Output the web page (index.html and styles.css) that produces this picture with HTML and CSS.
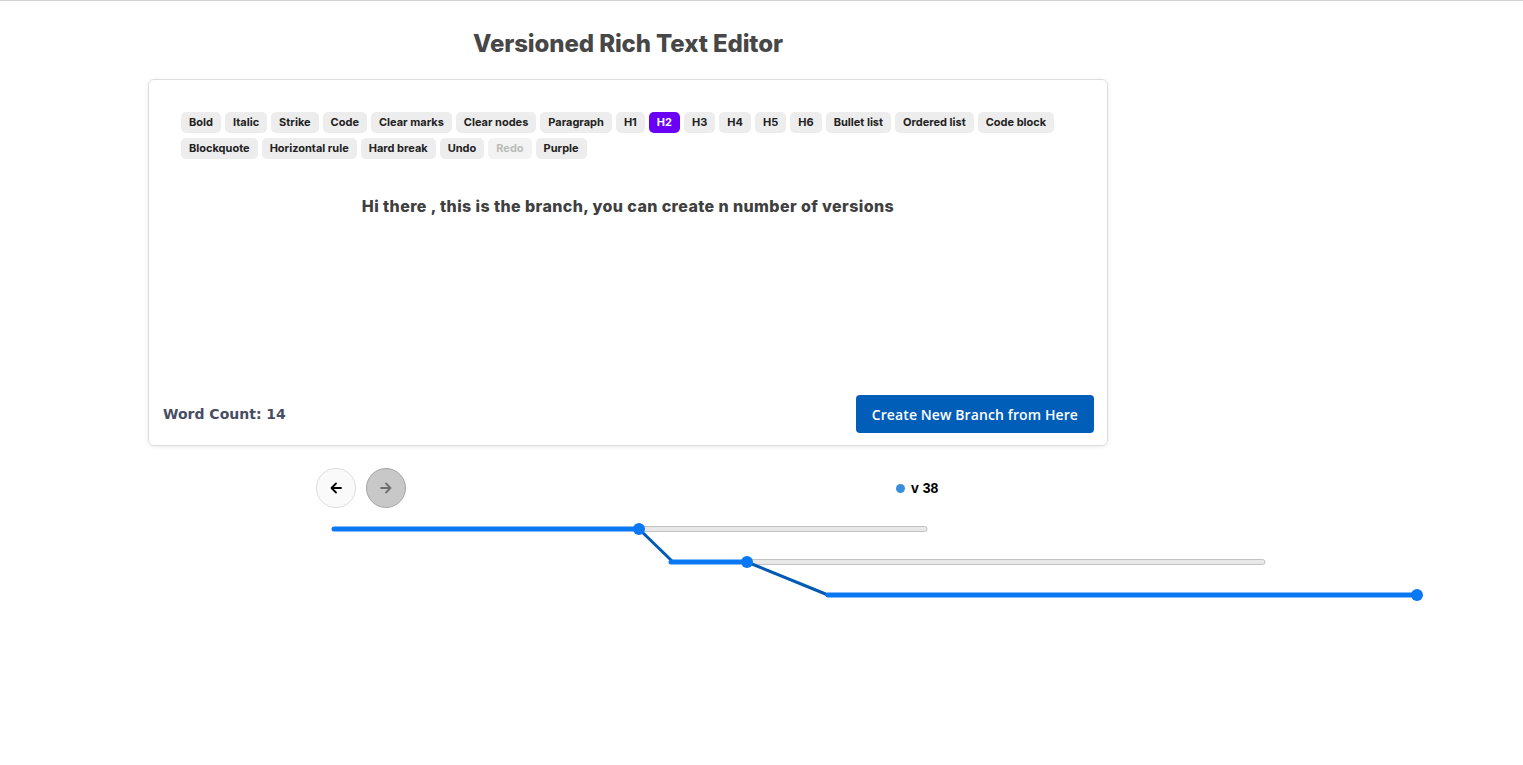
FILE: index.html
```html
<!DOCTYPE html>
<html>
<head>
<meta charset="utf-8">
<title>Versioned Rich Text Editor</title>
<link rel="stylesheet" href="styles.css">
</head>
<body>
<div class="app">
  <h1 class="title">Versioned Rich Text Editor</h1>
  <div class="card">
    <div class="toolbar">
      <button class="tb">Bold</button>
      <button class="tb">Italic</button>
      <button class="tb">Strike</button>
      <button class="tb">Code</button>
      <button class="tb">Clear marks</button>
      <button class="tb">Clear nodes</button>
      <button class="tb">Paragraph</button>
      <button class="tb">H1</button>
      <button class="tb active">H2</button>
      <button class="tb">H3</button>
      <button class="tb">H4</button>
      <button class="tb">H5</button>
      <button class="tb">H6</button>
      <button class="tb">Bullet list</button>
      <button class="tb">Ordered list</button>
      <button class="tb">Code block</button>
      <button class="tb">Blockquote</button>
      <button class="tb">Horizontal rule</button>
      <button class="tb">Hard break</button>
      <button class="tb">Undo</button>
      <button class="tb disabled">Redo</button>
      <button class="tb">Purple</button>
    </div>
    <div class="editor">
      <h2 class="doc-heading">Hi there , this is the branch, you can create n number of versions</h2>
    </div>
    <div class="footer">
      <span class="word-count">Word Count: 14</span>
      <button class="branch-btn">Create New Branch from Here</button>
    </div>
  </div>
</div>
<div class="nav-row">
  <div class="nav-buttons">
    <button class="nav-btn">
      <svg width="16" height="16" viewBox="0 0 16 16"><path d="M13 8H3.5M8 3.5L3.5 8L8 12.5" fill="none" stroke="#000" stroke-width="1.8" stroke-linecap="round" stroke-linejoin="round"/></svg>
    </button>
    <button class="nav-btn off">
      <svg width="16" height="16" viewBox="0 0 16 16"><path d="M3 8h9.5M8 3.5L12.5 8L8 12.5" fill="none" stroke="#6f6f6f" stroke-width="1.8" stroke-linecap="round" stroke-linejoin="round"/></svg>
    </button>
  </div>
  <div class="legend"><span class="legend-dot"></span><span class="legend-label">v 38</span></div>
</div>
<svg class="graph" width="1523" height="100" viewBox="0 0 1523 100">
  <rect x="636" y="10.5" width="291" height="5" rx="2.5" fill="#e8e8e8" stroke="#c2c2c2" stroke-width="1"/>
  <line x1="334" y1="13" x2="639" y2="13" stroke="#0a78f2" stroke-width="5" stroke-linecap="round"/>
  <line x1="639" y1="13" x2="673" y2="46" stroke="#005bb5" stroke-width="3"/>
  <circle cx="639" cy="13" r="6" fill="#0a78f2"/>
  <rect x="744" y="43.5" width="521" height="5" rx="2.5" fill="#e8e8e8" stroke="#c2c2c2" stroke-width="1"/>
  <line x1="671" y1="46" x2="747" y2="46" stroke="#0a78f2" stroke-width="5" stroke-linecap="round"/>
  <line x1="747" y1="46" x2="828" y2="79" stroke="#005bb5" stroke-width="3"/>
  <circle cx="747" cy="46" r="6" fill="#0a78f2"/>
  <line x1="828" y1="79" x2="1417" y2="79" stroke="#0a78f2" stroke-width="5" stroke-linecap="round"/>
  <circle cx="1417" cy="79" r="6" fill="#0a78f2"/>
</svg>
</body>
</html>
```
FILE: styles.css
```css
html, body {
  margin: 0;
  padding: 0;
  background: #fff;
}
body {
  border-top: 1px solid #d2d2d2;
  font-family: "Inter", "Liberation Sans", sans-serif;
}
.app {
  width: 960px;
  margin-left: 148px;
}
.title {
  margin: 28px 0 20px;
  text-align: center;
  font-family: "Inter", sans-serif;
  font-size: 24px;
  line-height: 30px;
  font-weight: 800;
  color: #474747;
  letter-spacing: -0.1px;
}
.card {
  box-sizing: border-box;
  height: 367px;
  border: 1px solid #dedede;
  border-radius: 6px;
  box-shadow: 0 1px 4px rgba(0,0,0,0.08);
  display: flex;
  flex-direction: column;
}
.toolbar {
  display: flex;
  flex-wrap: wrap;
  gap: 5px 4px;
  padding: 32px 32px 0 32px;
}
.tb {
  border: none;
  background: #ededed;
  color: #222;
  font-family: "Inter", sans-serif;
  font-size: 11px;
  font-weight: 700;
  line-height: 15px;
  padding: 3px 8px;
  border-radius: 5px;
  cursor: pointer;
}
.tb.active {
  background: #6a00f4;
  color: #fff;
}
.tb.disabled {
  background: #f3f3f3;
  color: #bbb;
}
.editor {
  padding: 37px 32px 0;
}
.doc-heading {
  margin: 0;
  text-align: center;
  font-family: "Inter", sans-serif;
  font-size: 16px;
  line-height: 20px;
  font-weight: 800;
  letter-spacing: 0.4px;
  color: #404040;
}
.footer {
  margin-top: auto;
  display: flex;
  align-items: center;
  justify-content: space-between;
  padding: 0 13px 12px 14px;
}
.word-count {
  font-family: "Comic Sans MS", "DejaVu Sans", sans-serif;
  font-weight: 700;
  font-size: 14px;
  color: #474d63;
}
.branch-btn {
  height: 38px;
  padding: 0 16px;
  border: none;
  border-radius: 4px;
  background: #005db8;
  color: #fff;
  font-family: "Open Sans", sans-serif;
  font-weight: 600;
  font-size: 14px;
  letter-spacing: 0.1px;
  cursor: pointer;
}
.nav-row {
  display: flex;
  align-items: center;
  margin-top: 22px;
  padding-left: 316px;
}
.nav-buttons {
  display: flex;
  gap: 10px;
}
.nav-btn {
  box-sizing: border-box;
  width: 40px;
  height: 40px;
  border-radius: 50%;
  border: 1px solid #dcdcdc;
  background: #fafafa;
  display: flex;
  align-items: center;
  justify-content: center;
  padding: 0;
}
.nav-btn.off {
  background: #c8c8c8;
  border-color: #a6a6a6;
}
.legend {
  display: flex;
  align-items: center;
  gap: 6px;
  margin-left: 490px;
}
.legend-dot {
  width: 9px;
  height: 9px;
  border-radius: 50%;
  background: #3a8fdc;
}
.legend-label {
  font-family: "Liberation Sans", sans-serif;
  font-weight: 700;
  font-size: 14px;
  color: #000;
}
.graph {
  display: block;
  margin-top: 8px;
}
```
